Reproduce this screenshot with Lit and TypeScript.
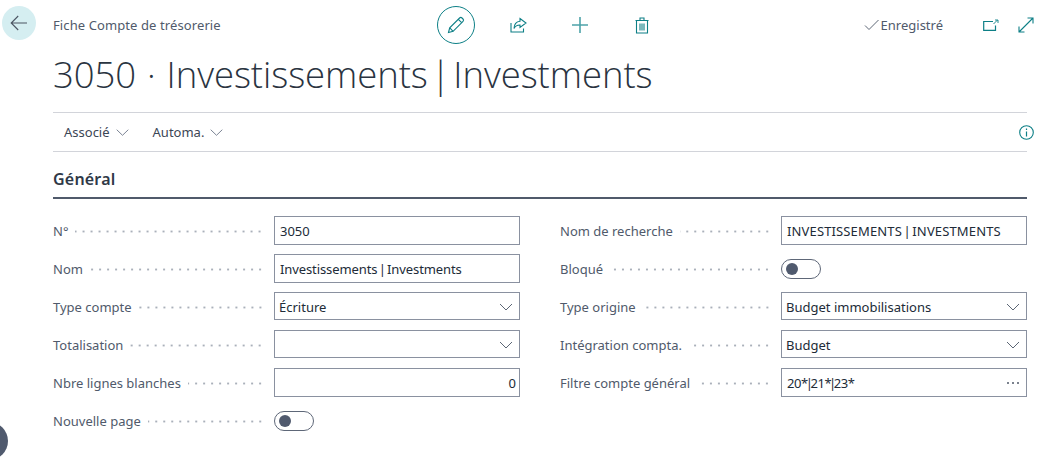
import { LitElement, html, css, svg } from "lit";
import { customElement } from "lit/decorators.js";

const TEAL = "#0d7f86";

const chevron = html`<svg class="chev" width="14" height="8" viewBox="0 0 14 8"><path d="M1 1l6 6 6-6" fill="none" stroke="#5c6675" stroke-width="1"/></svg>`;
const smallChev = html`<svg class="schev" width="13" height="7" viewBox="0 0 13 7"><path d="M.7.7l5.8 5.6L12.3.7" fill="none" stroke="#7b8494" stroke-width="1"/></svg>`;

const icon = (w: number, h: number, body: unknown) =>
  html`<svg width=${w} height=${h} viewBox="0 0 ${w} ${h}" fill="none" stroke=${TEAL} stroke-width="1.1">${body}</svg>`;

const toggle = html`<span class="toggle"><span class="knob"></span></span>`;

/* The reference font has a far narrower vertical bar, so bars get a pulled-in span. */
const withPipes = (text: string, cls = "pipe") => {
  const parts = text.split("|");
  return parts.map((p, i) => (i === 0 ? p : html`<span class=${cls}>|</span>${p}`));
};

@customElement("app-field")
class AppField extends LitElement {
  static properties = { label: {}, value: {}, kind: {}, tone: {} };
  label = "";
  value = "";
  kind = "text";
  tone = "";
  static styles = css`
    :host { display: block; height: 38px; }
    .row { display: flex; align-items: flex-start; height: 38px; }
    .lab { width: 221px; flex: none; display: flex; align-items: center; height: 29px; font-size: 13px; color: #505a6b; white-space: nowrap; }
    .dots { flex: 1; height: 3px; margin: 2px 10px 0 7px;
      background-image: radial-gradient(circle at center, #aab0ba 1px, transparent 1.2px);
      background-size: 8px 3px; background-position: right center; background-repeat: repeat-x; }
    .box { flex: 1; box-sizing: border-box; height: 29px; border: 1px solid #8a91a0; display: flex; align-items: center;
      padding: 0 5px; font-size: 13px; color: #212b38; white-space: nowrap; background: #fff; }
    .box.sel { height: 28px; padding: 1px 6px 0 4px; justify-content: space-between; }
    .box.num { justify-content: flex-end; padding-right: 3px; }
    .box.more { justify-content: space-between; padding-right: 7px; }
    .pipe { margin: 0 -2px; }
    .tight { letter-spacing: -0.1px; }
    .wide { letter-spacing: 0.14px; }
    .code { letter-spacing: -0.45px; }
    .ell { display: flex; gap: 3px; }
    .ell i { width: 2px; height: 2px; border-radius: 50%; background: #4f5968; display: block; }
    .toggle { box-sizing: border-box; display: flex; align-items: center; width: 40px; height: 20px; margin-top: 5px;
      border: 1px solid #5e6778; border-radius: 10px; padding-left: 4px; }
    .knob { width: 12px; height: 12px; border-radius: 50%; background: #505a6e; display: block; }
    svg { flex: none; }
  `;
  render() {
    let control: unknown;
    if (this.kind === "toggle") control = toggle;
    else if (this.kind === "select")
      control = html`<div class="box sel"><span>${this.value}</span>${chevron}</div>`;
    else if (this.kind === "num") control = html`<div class="box num">${this.value}</div>`;
    else if (this.kind === "more")
      control = html`<div class="box more"><span class=${this.tone}>${withPipes(this.value)}</span><span class="ell"><i></i><i></i><i></i></span></div>`;
    else control = html`<div class="box"><span class=${this.tone}>${withPipes(this.value)}</span></div>`;
    return html`<div class="row"><div class="lab"><span>${this.label}</span><span class="dots"></span></div>${control}</div>`;
  }
}

@customElement("app-root")
export class AppRoot extends LitElement {
  static styles = css`
    :host { display: block; position: relative; width: 1057px; height: 467px; overflow: hidden; background: #fff;
      font-family: "Noto Sans", "Open Sans", sans-serif; }
    .page { display: flex; align-items: flex-start; padding: 6px 30px 0 2px; }
    .back { flex: none; width: 34px; height: 34px; border-radius: 50%; background: #d5eef1; display: flex; align-items: center; justify-content: center; margin-right: 17px; }
    .main { flex: 1; min-width: 0; }
    .head { display: flex; align-items: center; height: 38px; }
    .crumb { width: 384px; flex: none; font-size: 13px; letter-spacing: 0.1px; color: #505a6b; margin-top: -1px; }
    .actions { display: flex; align-items: center; }
    .edit { width: 38px; height: 38px; box-sizing: border-box; border: 1px solid #0d7f86; border-radius: 50%; display: flex; align-items: center; justify-content: center; }
    .act { width: 62px; display: flex; justify-content: center; align-items: center; }
    .act.first { margin-left: 12px; }
    .status { flex: 1; display: flex; align-items: center; justify-content: flex-end; font-size: 13px; color: #505a6b; margin-right: -7px; }
    .status .txt { margin-left: 2px; margin-right: 40px; }
    .status .win { margin-right: 19px; display: flex; }
    .status .win.last { margin-right: 0; }
    .title { font-size: 36.5px; font-weight: 300; line-height: 50px; color: #2a3441; margin-top: 5px; white-space: nowrap; font-family: "Open Sans", sans-serif; letter-spacing: -0.06px; word-spacing: 1.5px; height: 63px; }
    .title .sep { word-spacing: -6.5px; }
    .bar { display: flex; align-items: center; height: 38px; border-top: 1px solid #d2d4da; border-bottom: 1px solid #d2d4da; font-size: 13px; color: #3c4655; padding-left: 11px; }
    .bar .item { display: flex; align-items: center; gap: 6px; margin-right: 24px; }
    .bar .info { margin-left: auto; margin-right: -7px; display: flex; }
    .sec { font-size: 16px; font-weight: 600; letter-spacing: 0.2px; color: #2f3947; height: 45px; line-height: 55px; border-bottom: 2px solid #505a6b; margin-bottom: 17px; }
    .grid { display: grid; grid-template-columns: 467px 467px; column-gap: 40px; }
    .blob { position: absolute; left: -30px; top: 422px; width: 38px; height: 38px; border-radius: 50%; background: #505a6e; }
  `;

  render() {
    return html`
      <div class="page">
        <div class="back">
          <svg width="18" height="16" viewBox="0 0 18 16" fill="none" stroke="#4c5563" stroke-width="1.1"><path d="M17 8H1.2M8.2 1L1.2 8l7 7"/></svg>
        </div>
        <div class="main">
          <div class="head">
            <div class="crumb">Fiche Compte de trésorerie</div>
            <div class="actions">
              <div class="edit">
                ${icon(18, 18, svg`<path d="M1.5 16.5l1.2-4.6L12.6 2a1.7 1.7 0 0 1 2.4 0l1 1a1.7 1.7 0 0 1 0 2.4L6.1 15.3z"/><path d="M11.3 3.3l3.4 3.4M2.8 11.9l3.3 3.4"/>`)}
              </div>
              <div class="act first">
                ${icon(17, 16, svg`<path d="M1 6v9h12.5v-3.5"/><path d="M10 1.5L16 6l-6 4.5V8C7 8 5.2 9 4 11.5 4.2 7.5 6.5 4.6 10 4.3z"/>`)}
              </div>
              <div class="act">
                ${icon(18, 18, svg`<path d="M9 1v16M1 9h16" stroke-width="1.6" stroke="#4da3a9"/>`)}
              </div>
              <div class="act">
                ${icon(14, 17, svg`<path d="M1.5 4v12h11V4M.5 3.5h13M5 3.5V1h4v2.5M5 6.5v7M7 6.5v7M9 6.5v7"/>`)}
              </div>
            </div>
            <div class="status">
              <svg width="15" height="12" viewBox="0 0 15 12" fill="none" stroke="#5c6675" stroke-width="1"><path d="M1 6.5l4 4L14.5 1"/></svg>
              <span class="txt">Enregistré</span>
              <span class="win">${icon(16, 12, svg`<path d="M10 2.5H.7v8.8h11.8V6.5" stroke-width="1.2"/><path d="M10.5 5l4-4M12 1h3v3" stroke-width=".9"/>`)}</span>
              <span class="win last">${icon(16, 16, svg`<path d="M1 15L15 1M9.5 1H15v5.5M1 9.5V15h5.5"/>`)}</span>
            </div>
          </div>
          <div class="title">3050 · Investissements<span class="sep"> | </span>Investments</div>
          <div class="bar">
            <span class="item">Associé ${smallChev}</span>
            <span class="item">Automa. ${smallChev}</span>
            <span class="info">${icon(15, 15, svg`<circle cx="7.5" cy="7.5" r="6.8"/><path d="M7.5 6.5v5M7.5 3.6v1.4" stroke-width="1.2"/>`)}</span>
          </div>
          <div class="sec">Général</div>
          <div class="grid">
            <div>
              <app-field label="N°" value="3050"></app-field>
              <app-field label="Nom" value="Investissements | Investments" tone="tight"></app-field>
              <app-field label="Type compte" value="Écriture" kind="select"></app-field>
              <app-field label="Totalisation" value="" kind="select"></app-field>
              <app-field label="Nbre lignes blanches" value="0" kind="num"></app-field>
              <app-field label="Nouvelle page" kind="toggle"></app-field>
            </div>
            <div>
              <app-field label="Nom de recherche" value="INVESTISSEMENTS | INVESTMENTS" tone="wide"></app-field>
              <app-field label="Bloqué" kind="toggle"></app-field>
              <app-field label="Type origine" value="Budget immobilisations" kind="select"></app-field>
              <app-field label="Intégration compta." value="Budget" kind="select"></app-field>
              <app-field label="Filtre compte général" value="20*|21*|23*" kind="more" tone="code"></app-field>
            </div>
          </div>
        </div>
      </div>
      <div class="blob"></div>
    `;
  }
}
void AppField;
